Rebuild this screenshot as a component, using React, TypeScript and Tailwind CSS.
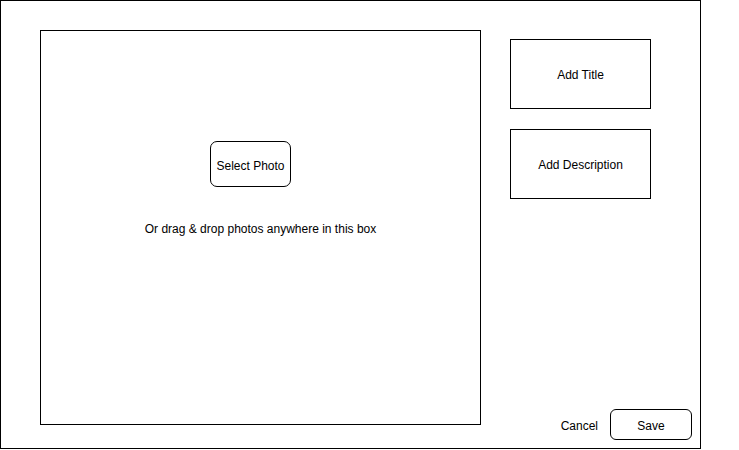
import React from "react";

const App: React.FC = () => {
  return (
    <div className="w-[739px] h-[450px] bg-white text-black text-[12px] font-['Liberation_Sans',Arial,sans-serif]">
      <div className="flex w-[701px] h-[449px] border border-black">
        {/* drop area */}
        <div className="ml-[39px] mt-[29px] w-[441px] h-[395px] border border-black flex flex-col">
          <button className="ml-[169px] mt-[110px] w-[81px] h-[46px] pt-[3px] border border-black rounded-[7px] flex items-center justify-center">
            Select Photo
          </button>
          <p className="mt-[35px] text-center leading-[14px]">Or drag &amp; drop photos anywhere in this box</p>
        </div>

        {/* details column */}
        <div className="flex-1 flex flex-col pl-[29px] pt-[38px] pr-[8px] pb-[8px]">
          <div className="w-[141px] h-[70px] pt-[2px] border border-black flex items-center justify-center">Add Title</div>
          <div className="mt-[20px] w-[141px] h-[70px] pt-[2px] border border-black flex items-center justify-center">
            Add Description
          </div>
          <div className="mt-auto flex items-center justify-end gap-[12px]">
            <button className="pt-[2px]">Cancel</button>
            <button className="w-[82px] h-[31px] pt-[2px] border border-black rounded-[6px] flex items-center justify-center">
              Save
            </button>
          </div>
        </div>
      </div>
    </div>
  );
};

export default App;
